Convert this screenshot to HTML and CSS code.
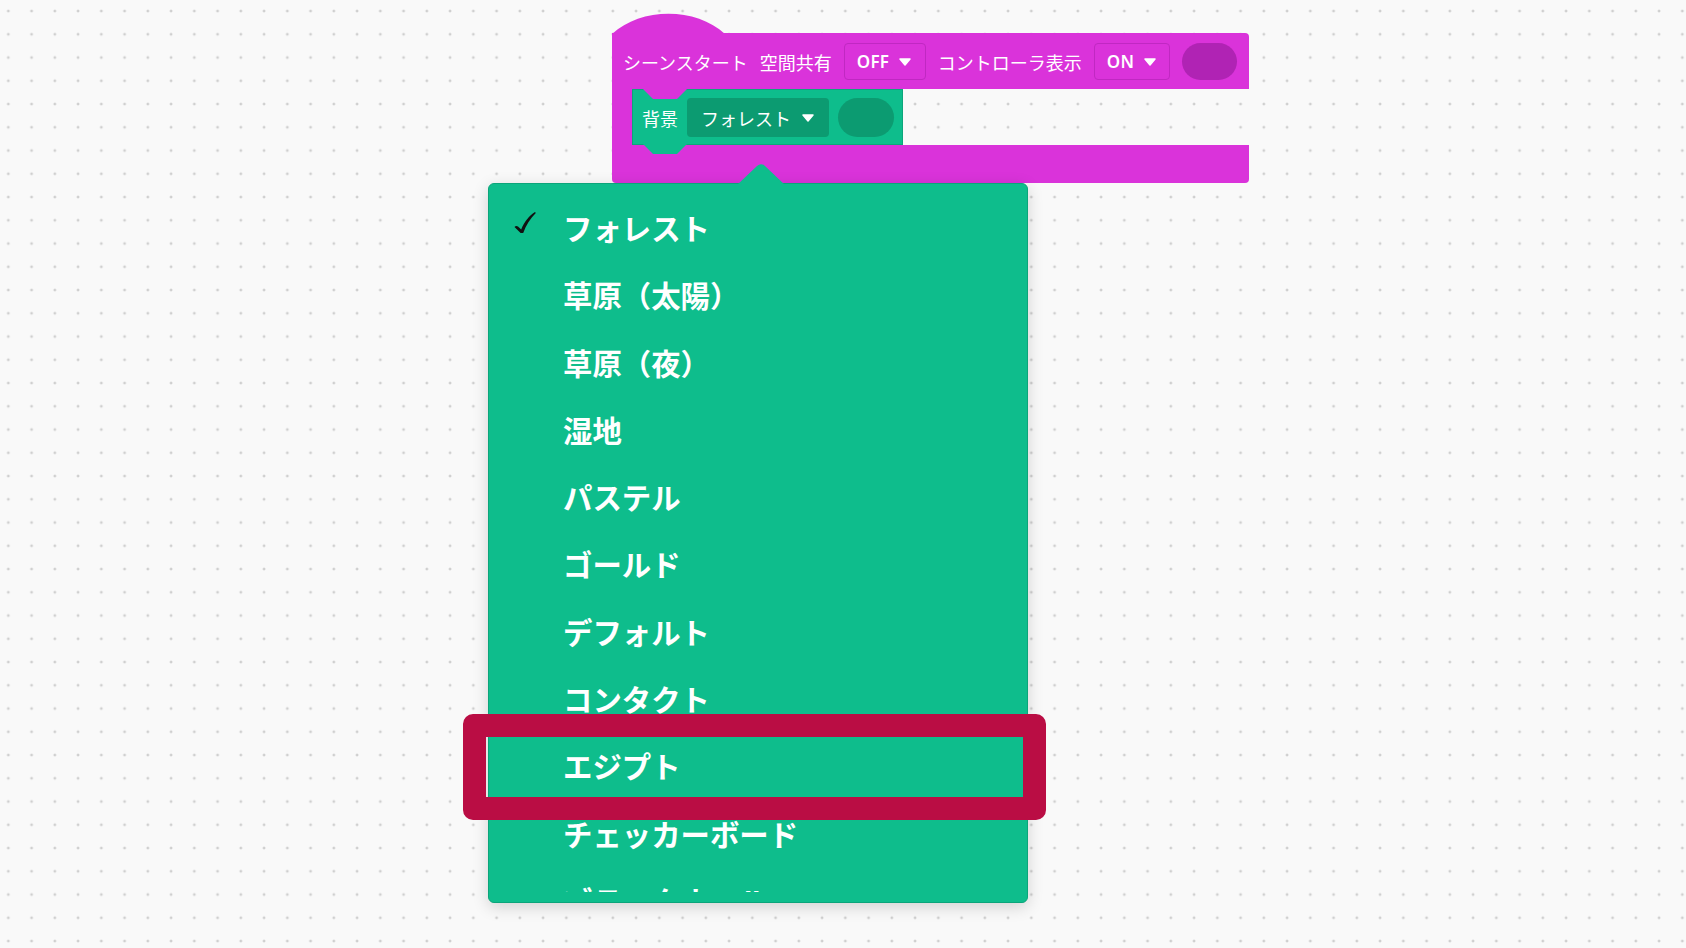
FILE: index.html
```html
<!DOCTYPE html>
<html lang="ja">
<head>
<meta charset="utf-8">
<title>シーンスタート</title>
<link rel="stylesheet" href="styles.css">
</head>
<body>
<div class="workspace">
  <div class="script">
    <svg class="hat" width="113" height="21" viewBox="0 0 113 21"><path d="M0,21 C29,-6 84,-6 113,21 Z" fill="#da33da"/></svg>
    <div class="c-top">
      <span class="label">シーンスタート</span>
      <span class="label">空間共有</span>
      <span class="field field-off"><span class="field-text">OFF</span><svg class="caret" width="12" height="8" viewBox="0 0 12 8"><path d="M1,1 L11,1 L6,7 Z" fill="#fff" stroke="#fff" stroke-width="1.5" stroke-linejoin="round"/></svg></span>
      <span class="label">コントローラ表示</span>
      <span class="field field-on"><span class="field-text">ON</span><svg class="caret" width="12" height="8" viewBox="0 0 12 8"><path d="M1,1 L11,1 L6,7 Z" fill="#fff" stroke="#fff" stroke-width="1.5" stroke-linejoin="round"/></svg></span>
      <span class="pill pill-purple"></span>
    </div>
    <div class="c-mouth">
      <div class="c-arm"></div>
      <div class="stack-block">
        <span class="label">背景</span>
        <span class="field field-green"><span class="field-text-jp">フォレスト</span><svg class="caret" width="12" height="8" viewBox="0 0 12 8"><path d="M1,1 L11,1 L6,7 Z" fill="#fff" stroke="#fff" stroke-width="1.5" stroke-linejoin="round"/></svg></span>
        <span class="pill pill-green"></span>
      </div>
    </div>
    <div class="c-bottom"></div>
  </div>

  <div class="dropdown">
    <svg class="dropdown-arrow" width="48" height="22" viewBox="0 0 48 22"><path d="M0,22 L20,3 Q24,-0.5 28,3 L48,22 Z" fill="#0ebd8c"/></svg>
    <div class="menu">
      <div class="menu-item"><span class="check"><svg width="24" height="24" viewBox="0 0 24 24"><path d="M1.5,17 C2.5,15.6 4,15.6 5,16.6 L8.2,19.6 C11,12 16,6 22,2 L22.8,3 C17.5,8.5 13,15 10.2,23 L7.6,23 Z" fill="#111"/></svg></span><span class="item-text">フォレスト</span></div>
      <div class="menu-item"><span class="check"></span><span class="item-text">草原（太陽）</span></div>
      <div class="menu-item"><span class="check"></span><span class="item-text">草原（夜）</span></div>
      <div class="menu-item"><span class="check"></span><span class="item-text">湿地</span></div>
      <div class="menu-item"><span class="check"></span><span class="item-text">パステル</span></div>
      <div class="menu-item"><span class="check"></span><span class="item-text">ゴールド</span></div>
      <div class="menu-item"><span class="check"></span><span class="item-text">デフォルト</span></div>
      <div class="menu-item"><span class="check"></span><span class="item-text">コンタクト</span></div>
      <div class="menu-item"><span class="check"></span><span class="item-text">エジプト</span></div>
      <div class="menu-item"><span class="check"></span><span class="item-text">チェッカーボード</span></div>
      <div class="menu-item"><span class="check"></span><span class="item-text">ブラックホール</span></div>
    </div>
  </div>

  <div class="highlight"></div>
</div>
</body>
</html>
```

FILE: styles.css
```css
html, body {
  margin: 0;
  padding: 0;
  width: 100%;
  height: 100%;
  overflow: hidden;
}

body {
  background-color: #f9f9f9;
  background-image: radial-gradient(circle, #cfcfcf 1.1px, rgba(207,207,207,0) 1.7px);
  background-size: 23.25px 23.25px;
  background-position: -3.3px -0.6px;
  font-family: "Noto Sans CJK JP", "Noto Sans", sans-serif;
}

.workspace {
  position: relative;
  width: 1686px;
  height: 948px;
}

/* ---------- Scratch-like script ---------- */
.script {
  position: absolute;
  left: 612px;
  top: 13px;
  width: 637px;
  display: flex;
  flex-direction: column;
}

.hat {
  display: block;
  margin-bottom: -1px;
}

.c-top {
  height: 56px;
  background: #da33da;
  border-radius: 0 4px 0 0;
  display: flex;
  align-items: center;
  gap: 12px;
  padding: 1px 11px 0;
  box-sizing: border-box;
}

.label {
  color: #fff;
  font-size: 18px;
  line-height: 1;
  white-space: nowrap;
  font-weight: 400;
}

.field {
  display: flex;
  align-items: center;
  height: 37px;
  box-sizing: border-box;
  border-radius: 4px;
  padding-left: 12px;
  gap: 10px;
}

.field-off {
  width: 82px;
  border: 1px solid #c028c2;
}

.field-on {
  width: 76px;
  border: 1px solid #c028c2;
}

.field-text {
  color: #fff;
  font-family: "Noto Sans", "Liberation Sans", sans-serif;
  font-size: 17px;
  font-weight: 600;
  line-height: 1;
  letter-spacing: 0.3px;
}

.caret {
  display: block;
  flex: none;
}

.pill {
  display: block;
  height: 37px;
  border-radius: 19px;
  flex: none;
}

.pill-purple {
  width: 55px;
  background: #b023b4;
}

.c-mouth {
  display: flex;
  height: 56px;
}

.c-arm {
  width: 20px;
  background: #da33da;
}

.stack-block {
  position: relative;
  width: 271px;
  box-sizing: border-box;
  background: #0ebd8c;
  border: 1px solid #0ca67b;
  display: flex;
  align-items: center;
  gap: 9px;
  padding: 1px 8px 0 9px;
}

.stack-block::before {
  content: "";
  position: absolute;
  left: 10px;
  top: -1px;
  width: 44px;
  height: 10px;
  background: #da33da;
  clip-path: polygon(0 0, 100% 0, calc(100% - 10px) 100%, 10px 100%);
}

.stack-block::after {
  content: "";
  position: absolute;
  left: 10px;
  top: 100%;
  width: 44px;
  height: 10px;
  background: #0ebd8c;
  clip-path: polygon(0 0, 100% 0, calc(100% - 10px) 100%, 10px 100%);
}

.stack-block .label {
  width: 36px;
}

.field-green {
  width: 142px;
  height: 39px;
  background: #0c9b71;
  padding-left: 14px;
  gap: 11px;
}

.field-text-jp {
  color: #fff;
  font-size: 18px;
  line-height: 1;
  white-space: nowrap;
}

.pill-green {
  width: 56px;
  height: 39px;
  border-radius: 20px;
  background: #0c9b71;
}

.c-bottom {
  height: 38px;
  background: #da33da;
  border-radius: 0 0 4px 4px;
}

/* ---------- Dropdown ---------- */
.dropdown {
  position: absolute;
  left: 488px;
  top: 183px;
  width: 540px;
  height: 720px;
  box-sizing: border-box;
  background: #0ebd8c;
  border: 1px solid #0ba57a;
  border-radius: 6px;
  padding: 10px 0;
  box-shadow: 0 4px 16px rgba(0, 0, 0, 0.16);
}

.dropdown-arrow {
  position: absolute;
  left: 248px;
  top: -21px;
  display: block;
}

.menu {
  height: 100%;
  overflow: hidden;
}

.menu-item {
  height: 67.3px;
  display: flex;
  align-items: center;
  padding-left: 24px;
}

.check {
  width: 50px;
  flex: none;
  display: flex;
  align-items: center;
}

.check svg {
  display: block;
  transform: translateY(-6px);
}

.item-text {
  color: #fff;
  font-size: 29.4px;
  font-weight: 700;
  line-height: 1;
  white-space: nowrap;
}

/* ---------- Annotation highlight ---------- */
.highlight {
  position: absolute;
  left: 463px;
  top: 714px;
  width: 583px;
  height: 106px;
  box-sizing: border-box;
  border: 23px solid #ba0d44;
  border-radius: 10px;
}
```
